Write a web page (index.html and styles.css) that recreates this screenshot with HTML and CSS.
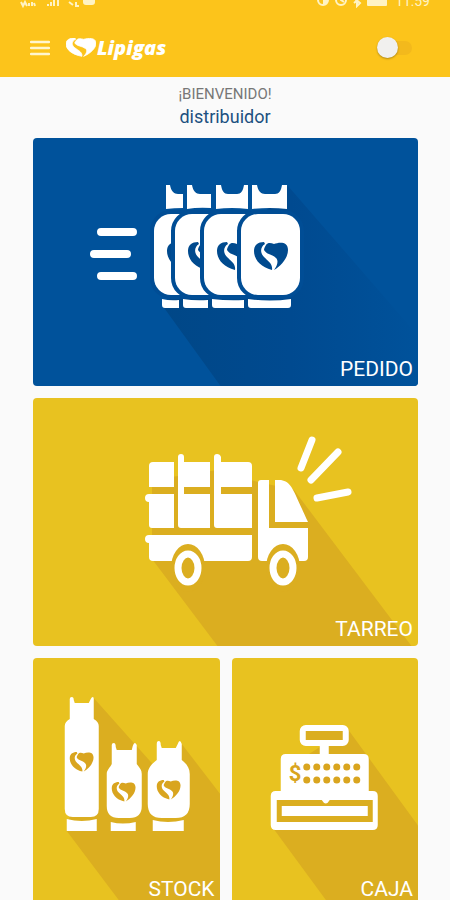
FILE: index.html
```html
<!DOCTYPE html>
<html lang="es">
<head>
    <meta charset="UTF-8">
    <meta name="viewport" content="width=device-width, initial-scale=1.0">
    <title>Lipigas</title>
    <link rel="stylesheet" href="styles.css">
</head>
<body>
    <!-- shared shapes -->
    <svg class="defs" width="0" height="0" aria-hidden="true">
        <defs>
            <g id="heart">
                <path d="M10 0C4 0 0 3 0 9C0 17 6 25 18 28C19 22 14 19 10 15C6 11 6 5 11 2Z"/>
                <path d="M12 3C14 0 17 1 20 2C25 0 34 -1 34 8C34 16 27 24 20 28C23 24 25 19 22 16C18 12 13 13 10 8C10 6 11 5 12 3Z"/>
            </g>
            <g id="tank">
                <rect x="0" y="0" width="59" height="81" rx="17" fill="#fff" stroke="#004d95" stroke-width="8" paint-order="stroke"/>
                <use href="#heart" x="13" y="28" fill="#004a8e"/>
            </g>
            <linearGradient id="blue-shade" x1="0" y1="0" x2="1" y2="0">
                <stop offset="0" stop-color="#004787"/>
                <stop offset="0.5" stop-color="#004a90"/>
                <stop offset="1" stop-color="#00529b"/>
            </linearGradient>
        </defs>
    </svg>

    <div class="app">
        <header class="topbar">
            <div class="status">
                <svg width="78" height="8" viewBox="0 0 78 8" aria-hidden="true">
                    <path d="M1 2l2 4 2-4 2 4M9 3v3M12 2v4M14 3l1 3M28 6V4M31 6V2M34 6V0M38 6V0M49 2l4 3M56 2v4h3" fill="none" stroke="#fff3c4" stroke-width="2"/>
                    <rect x="63" y="-6" width="12" height="11" rx="3" fill="#fff3c4"/>
                </svg>
                <div class="status-right">
                    <svg width="76" height="8" viewBox="0 0 76 8" aria-hidden="true">
                        <g fill="none" stroke="#fff3c4" stroke-width="2">
                            <circle cx="8" cy="0" r="5"/>
                            <circle cx="26" cy="0" r="5"/>
                            <path d="M26 -3v3l3 2M39 3l6-5M42 -6v12l3-3-6-5"/>
                        </g>
                        <path d="M8 -5a5 5 0 0 1 0 10z" fill="#fff3c4"/>
                        <rect x="52" y="-4" width="20" height="10" rx="1" fill="#fff3c4"/>
                    </svg>
                    <span class="time">11:59</span>
                </div>
            </div>
            <nav class="toolbar">
                <button class="menu" aria-label="Menú">
                    <svg width="20" height="16" viewBox="0 0 20 16">
                        <path d="M1 2H19M1 8H19M1 14H19" stroke="#fff6cf" stroke-width="2.5" stroke-linecap="round"/>
                    </svg>
                </button>
                <a class="brand" href="#">
                    <svg width="30" height="19" viewBox="0 0 34 29" preserveAspectRatio="none" aria-hidden="true">
                        <use href="#heart" fill="#fff" stroke="#fff" stroke-width="1"/>
                    </svg>
                    <span>Lipigas</span>
                </a>
                <input class="switch" type="checkbox" role="switch" aria-label="Disponible">
            </nav>
        </header>

        <main>
            <div class="welcome">
                <p class="hello">¡BIENVENIDO!</p>
                <p class="user">distribuidor</p>
            </div>

            <div class="cards">
                <a class="card wide blue" href="#">
                    <svg viewBox="33 138 385 248" preserveAspectRatio="xMidYMid slice" aria-hidden="true">
                        <path d="M162 305L222 388H420V338L288 186L240 240Z" fill="url(#blue-shade)"/>
                        <path d="M101 232H133M94 254H127M101 276H133" stroke="#fff" stroke-width="8" stroke-linecap="round"/>
                        <use href="#tank" x="154" y="214"/>
                        <use href="#tank" x="175" y="214"/>
                        <use href="#tank" x="204" y="214"/>
                        <use href="#tank" x="241" y="214"/>
                        <g fill="#fff">
                            <!-- collars -->
                            <path d="M166 185H170C171 191 174 194 178 194H183V208Q174 208 166 209Z"/>
                            <path d="M187 185H192C193 191 196 194 200 194H211V208Q198 207 187 209Z"/>
                            <path d="M216 185H221C222 191 224 194 228 194H237C241 194 243 191 244 185H248V209Q232 207 216 209Z"/>
                            <path d="M252 185H257C258 191 261 194 265 194H275C279 194 281 191 282 185H287V209Q270 207 252 209Z"/>
                            <!-- feet -->
                            <path d="M162 299Q170 301 179 300V308H165Q162 308 162 305Z"/>
                            <path d="M183 299Q195 301 208 300V308H186Q183 308 183 305Z"/>
                            <path d="M212 299Q228 301 244 300V308H215Q212 308 212 305Z"/>
                            <path d="M248 299Q270 302 291 299V305Q291 308 288 308H251Q248 308 248 305Z"/>
                        </g>
                    </svg>
                    <span class="label">PEDIDO</span>
                </a>

                <a class="card wide" href="#">
                    <svg viewBox="33 398 385 248" preserveAspectRatio="xMidYMid slice" aria-hidden="true">
                        <path d="M152 559L219 648H413L294 490L250 480V465L152 480Z" fill="#dbae20"/>
                        <g fill="#fff">
                            <!-- load -->
                            <path d="M153 462H174V487H149V466Q149 462 153 462Z"/>
                            <path d="M149 494H174V528H152Q149 528 149 525V502Q145 502 145 498T149 494Z"/>
                            <path d="M178 457Q178 454 181 454T184 457V462H210V487H184V494H210V528H181Q178 528 178 525Z"/>
                            <path d="M214 457Q214 454 217 454T221 457V462H248Q252 462 252 466V487H221V494H252V528H217Q214 528 214 525Z"/>
                            <path d="M149 535H252V557Q252 561 248 561H153Q149 561 149 557V543Q145 543 145 539T149 535Z"/>
                            <!-- cab -->
                            <path d="M261 480H269V528H308V557Q308 561 304 561H262Q258 561 258 557V483Q258 480 261 480Z"/>
                            <path d="M275 480H281C292 482 293 490 308 522H275Z"/>
                        </g>
                        <g fill="#dbae20">
                            <ellipse cx="188" cy="568" rx="17" ry="24"/>
                            <ellipse cx="283" cy="568" rx="17" ry="24"/>
                        </g>
                        <g fill="#dbae20" stroke="#fff" stroke-width="7">
                            <ellipse cx="188" cy="568" rx="10" ry="14"/>
                            <ellipse cx="283" cy="568" rx="10" ry="14"/>
                        </g>
                        <path d="M312 440L301 468M338 452L311 480M348 492L317 498" stroke="#fff" stroke-width="7" stroke-linecap="round"/>
                    </svg>
                    <span class="label">TARREO</span>
                </a>

                <a class="card" href="#">
                    <svg viewBox="33 658 187 248" preserveAspectRatio="xMidYMid slice" aria-hidden="true">
                        <path d="M67 831L125 908H222V796L182 744L160 772L94 698Z" fill="#dbae20"/>
                        <g fill="#fff">
                            <path d="M70 699Q70 697 72 697T74 700L75 703H89L91 699Q92 697 93 697T94 699V719Q99 722 99 726V809Q99 817 91 817H73Q65 817 65 809V726Q65 722 70 719Z"/>
                            <path d="M67 819Q82 823 97 819V831H67Z"/>
                            <path d="M112 745Q112 743 114 743T116 747L117 750H132L133 746Q134 743 135 743T137 745V764C140 768 142 770 142 774V806Q142 818 130 818H119Q107 818 107 806V774C107 770 110 768 112 764Z"/>
                            <path d="M111 822Q123 825 136 822V831H111Z"/>
                            <path d="M157 744Q157 741 159 741T161 745L162 748H176L178 744Q179 741 180 741T182 744V760C187 764 190 768 190 774V804Q190 818 176 818H162Q148 818 148 804V774C148 768 152 764 157 760Z"/>
                            <path d="M153 820Q168 824 184 820V831H153Z"/>
                        </g>
                        <g fill="#d9a51f">
                            <use href="#heart" transform="translate(70 752) scale(0.7)"/>
                            <use href="#heart" transform="translate(112 782) scale(0.7)"/>
                            <use href="#heart" transform="translate(157 780) scale(0.7)"/>
                        </g>
                    </svg>
                    <span class="label">STOCK</span>
                </a>

                <a class="card" href="#">
                    <svg viewBox="232 658 187 248" preserveAspectRatio="xMidYMid slice" aria-hidden="true">
                        <path d="M274 829L332 908H420V828L348 729L300 760Z" fill="#dbae20"/>
                        <rect x="303" y="728" width="43" height="15" rx="3" fill="#dbae20" stroke="#fff" stroke-width="6"/>
                        <path d="M320 745H329V754H364Q369 754 369 759V791H373Q378 791 378 796V825Q378 830 373 830H276Q271 830 271 825V796Q271 791 276 791H281V759Q281 754 286 754H320Z" fill="#fff"/>
                        <path d="M277 800H322Q326 807 330 800H373V822H277Z" fill="#dbae20"/>
                        <rect x="282" y="806" width="86" height="10" fill="#fff"/>
                        <path d="M307 767H358M307 780H358" stroke="#d9a51f" stroke-width="7" stroke-linecap="round" stroke-dasharray="0 10"/>
                        <text class="coin" x="289" y="781">$</text>
                    </svg>
                    <span class="label">CAJA</span>
                </a>
            </div>
        </main>
    </div>
</body>
</html>
```

FILE: styles.css
```css
* {
    box-sizing: border-box;
}

body {
    margin: 0;
    background-color: #fafafa;
    font-family: Roboto, Arial, sans-serif;
}

.defs {
    position: absolute;
}

.app {
    height: 100vh;
    overflow: hidden;
}

.topbar {
    background-color: #fcc41b;
    padding-bottom: 14px;
}

.status {
    display: flex;
    justify-content: space-between;
    height: 8px;
    padding: 0 20px;
    overflow: hidden;
}

.status-right {
    display: flex;
    align-items: flex-end;
    gap: 4px;
}

.time {
    color: #fff3c4;
    font-size: 14px;
    line-height: 14px;
}

.toolbar {
    display: flex;
    align-items: center;
    height: 55px;
    margin-left: 30px;
    margin-right: 38px;
    padding-top: 24px;
}

.menu {
    display: flex;
    padding: 0;
    border: none;
    background: none;
    cursor: pointer;
}

.brand {
    display: flex;
    align-items: center;
    gap: 1px;
    margin-left: 16px;
    color: #fff;
    font-family: "Open Sans", sans-serif;
    font-size: 20px;
    font-style: italic;
    font-weight: 800;
    line-height: 24px;
    text-decoration: none;
}

.switch {
    appearance: none;
    display: flex;
    align-items: center;
    width: 35px;
    height: 14px;
    margin: 0 0 0 auto;
    border-radius: 7px;
    background-color: #f3b91c;
    cursor: pointer;
}

.switch::before {
    content: "";
    flex: none;
    width: 21px;
    height: 21px;
    border-radius: 50%;
    background-color: #f1f0ee;
    box-shadow: 0 1px 2px rgba(0, 0, 0, 0.3);
}

.switch:checked {
    justify-content: flex-end;
}

.welcome {
    padding: 6px 0 10px;
    text-align: center;
}

.welcome p {
    margin: 0;
}

.hello {
    color: #777;
    font-size: 15px;
    line-height: 22px;
}

.user {
    color: #1c5080;
    font-size: 18px;
    line-height: 23px;
}

.cards {
    display: grid;
    grid-template-columns: 1fr 1fr;
    gap: 12px;
    padding: 0 32px 12px 33px;
}

.card {
    display: grid;
    height: 248px;
    border-radius: 4px;
    overflow: hidden;
    background-color: #e8c220;
    color: #fff;
    text-decoration: none;
}

.card.wide {
    grid-column: span 2;
}

.card.blue {
    background-color: #00529b;
}

.card svg,
.label {
    grid-area: 1 / 1;
}

.card svg {
    width: 100%;
    height: 248px;
}

.label {
    place-self: end;
    padding: 0 5px 4px;
    font-size: 21px;
    line-height: 26px;
}

.coin {
    fill: #d9a51f;
    font-size: 22px;
    font-weight: bold;
}
```
